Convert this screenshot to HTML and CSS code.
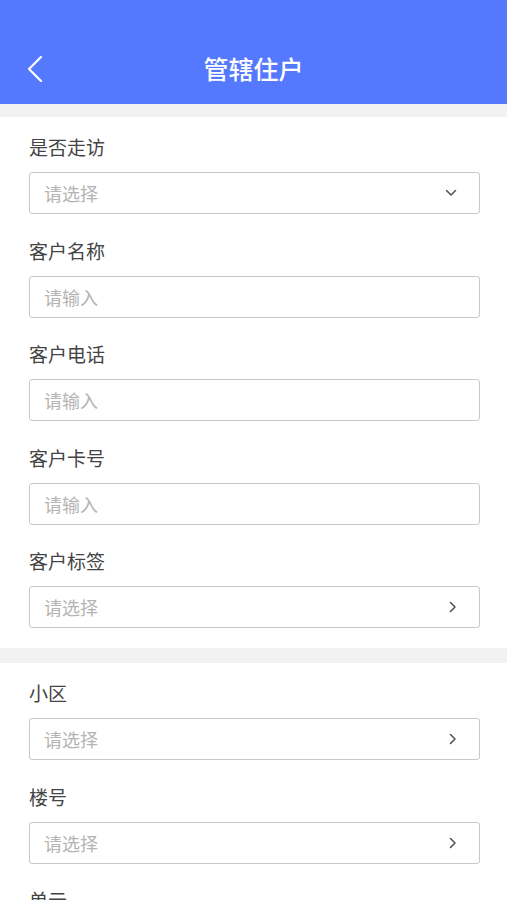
FILE: index.html
```html
<!DOCTYPE html>
<html>
<head>
    <meta charset="utf-8">
    <title>管辖住户</title>
    <link rel="stylesheet" href="styles.css">
</head>
<body>
    <div class="header">
        <svg class="back" width="16" height="26" viewBox="0 0 16 26">
            <path d="M14 1 L2 13 L14 25" fill="none" stroke="#fff" stroke-width="2.2" stroke-linecap="round" stroke-linejoin="round"/>
        </svg>
        <h1 class="title">管辖住户</h1>
    </div>

    <div class="section">
        <div class="field">
            <div class="label">是否走访</div>
            <div class="box">
                <span class="placeholder">请选择</span>
                <svg class="arrow" width="12" height="8" viewBox="0 0 12 8"><path d="M1.5 1.5 L6 6 L10.5 1.5" fill="none" stroke="#555" stroke-width="1.6" stroke-linecap="round" stroke-linejoin="round"/></svg>
            </div>
        </div>
        <div class="field">
            <div class="label">客户名称</div>
            <div class="box"><span class="placeholder">请输入</span></div>
        </div>
        <div class="field">
            <div class="label">客户电话</div>
            <div class="box"><span class="placeholder">请输入</span></div>
        </div>
        <div class="field">
            <div class="label">客户卡号</div>
            <div class="box"><span class="placeholder">请输入</span></div>
        </div>
        <div class="field">
            <div class="label">客户标签</div>
            <div class="box">
                <span class="placeholder">请选择</span>
                <svg class="arrow" width="8" height="12" viewBox="0 0 8 12"><path d="M1.5 1.5 L6 6 L1.5 10.5" fill="none" stroke="#555" stroke-width="1.6" stroke-linecap="round" stroke-linejoin="round"/></svg>
            </div>
        </div>
    </div>

    <div class="section">
        <div class="field">
            <div class="label">小区</div>
            <div class="box">
                <span class="placeholder">请选择</span>
                <svg class="arrow" width="8" height="12" viewBox="0 0 8 12"><path d="M1.5 1.5 L6 6 L1.5 10.5" fill="none" stroke="#555" stroke-width="1.6" stroke-linecap="round" stroke-linejoin="round"/></svg>
            </div>
        </div>
        <div class="field">
            <div class="label">楼号</div>
            <div class="box">
                <span class="placeholder">请选择</span>
                <svg class="arrow" width="8" height="12" viewBox="0 0 8 12"><path d="M1.5 1.5 L6 6 L1.5 10.5" fill="none" stroke="#555" stroke-width="1.6" stroke-linecap="round" stroke-linejoin="round"/></svg>
            </div>
        </div>
        <div class="field">
            <div class="label">单元</div>
            <div class="box">
                <span class="placeholder">请选择</span>
                <svg class="arrow" width="8" height="12" viewBox="0 0 8 12"><path d="M1.5 1.5 L6 6 L1.5 10.5" fill="none" stroke="#555" stroke-width="1.6" stroke-linecap="round" stroke-linejoin="round"/></svg>
            </div>
        </div>
    </div>
</body>
</html>
```

FILE: styles.css
```css
body {
    margin: 0;
    background-color: #f2f2f2;
    font-family: "Noto Sans CJK SC", "Noto Sans", sans-serif;
}

.header {
    height: 104px;
    background-color: #5479fe;
    display: flex;
    align-items: flex-end;
    justify-content: center;
    position: relative;
}

.back {
    position: absolute;
    left: 27px;
    top: 56px;
}

.title {
    margin: 0 0 19px;
    color: #fff;
    font-size: 25px;
    font-weight: 500;
    line-height: 33px;
}

.section {
    background-color: #fff;
    padding: 17px 27px 20px 29px;
    margin-top: 13px;
}

.section + .section {
    margin-top: 15px;
}

.field + .field {
    margin-top: 23.5px;
}

.label {
    font-size: 19px;
    line-height: 26px;
    color: #444;
    margin-bottom: 12px;
}

.box {
    height: 42px;
    box-sizing: border-box;
    border: 1px solid #c8c8c8;
    border-radius: 3px;
    display: flex;
    align-items: center;
    justify-content: space-between;
    padding: 0 22px 0 14px;
}

.placeholder {
    font-size: 18px;
    color: #b4b4b4;
}
```
